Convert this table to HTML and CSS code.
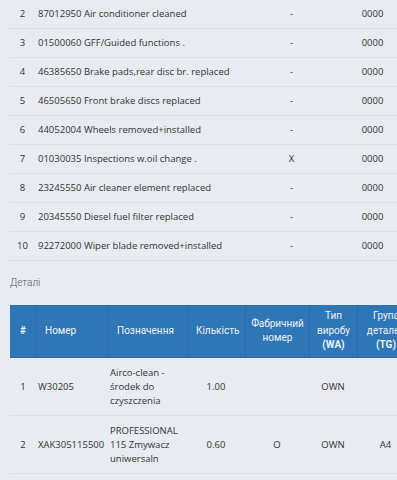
FILE: index.html
```html
<!DOCTYPE html>
<html lang="uk">
<head>
<meta charset="utf-8">
<link rel="stylesheet" href="styles.css">
</head>
<body>
<div class="page">
  <table class="ops">
    <colgroup>
      <col class="c-num"><col class="c-desc"><col class="c-flag"><col class="c-code">
    </colgroup>
    <tbody>
      <tr><td class="num">2</td><td>87012950 Air conditioner cleaned</td><td class="ctr">-</td><td class="ctr">0000</td></tr>
      <tr><td class="num">3</td><td>01500060 GFF/Guided functions .</td><td class="ctr">-</td><td class="ctr">0000</td></tr>
      <tr><td class="num">4</td><td>46385650 Brake pads,rear disc br. replaced</td><td class="ctr">-</td><td class="ctr">0000</td></tr>
      <tr><td class="num">5</td><td>46505650 Front brake discs replaced</td><td class="ctr">-</td><td class="ctr">0000</td></tr>
      <tr><td class="num">6</td><td>44052004 Wheels removed+installed</td><td class="ctr">-</td><td class="ctr">0000</td></tr>
      <tr><td class="num">7</td><td>01030035 Inspections w.oil change .</td><td class="ctr">X</td><td class="ctr">0000</td></tr>
      <tr><td class="num">8</td><td>23245550 Air cleaner element replaced</td><td class="ctr">-</td><td class="ctr">0000</td></tr>
      <tr><td class="num">9</td><td>20345550 Diesel fuel filter replaced</td><td class="ctr">-</td><td class="ctr">0000</td></tr>
      <tr><td class="num">10</td><td>92272000 Wiper blade removed+installed</td><td class="ctr">-</td><td class="ctr">0000</td></tr>
    </tbody>
  </table>

  <h3 class="section-title">Деталі</h3>

  <table class="parts">
    <colgroup>
      <col class="p-num"><col class="p-no"><col class="p-name"><col class="p-qty"><col class="p-serial"><col class="p-type"><col class="p-group">
    </colgroup>
    <thead>
      <tr>
        <th class="ctr hash">#</th>
        <th>Номер</th>
        <th>Позначення</th>
        <th>Кількість</th>
        <th class="ctr">Фабричний<br>номер</th>
        <th class="ctr">Тип<br>виробу<br><b>(WA)</b></th>
        <th class="ctr">Група<br>деталей<br><b>(TG)</b></th>
      </tr>
    </thead>
    <tbody>
      <tr>
        <td class="ctr">1</td>
        <td>W30205</td>
        <td>Airco-clean -<br>środek do<br>czyszczenia</td>
        <td class="ctr">1.00</td>
        <td class="ctr"></td>
        <td class="ctr">OWN</td>
        <td class="ctr"></td>
      </tr>
      <tr>
        <td class="ctr">2</td>
        <td>XAK305115500</td>
        <td>PROFESSIONAL<br>115 Zmywacz<br>uniwersaln</td>
        <td class="ctr">0.60</td>
        <td class="ctr">O</td>
        <td class="ctr">OWN</td>
        <td class="ctr">A4</td>
      </tr>
    </tbody>
  </table>
</div>
</body>
</html>
```

FILE: styles.css
```css
html, body {
  margin: 0;
  padding: 0;
  background: #e9ebf3;
  overflow: hidden;
}

.page {
  width: 397px;
  overflow: hidden;
  padding-left: 9px;
  box-sizing: border-box;
  font-family: "Open Sans", "Noto Sans", sans-serif;
  color: #333;
}

table {
  border-collapse: separate;
  border-spacing: 0;
  table-layout: fixed;
}

.ops {
  width: 418px;
}
.c-num { width: 27px; }
.c-desc { width: 229px; }
.c-flag { width: 53px; }
.c-code { width: 109px; }

.ops td {
  box-sizing: border-box;
  height: 29px;
  padding: 0 2px;
  font-size: 9.5px;
  line-height: 14px;
  white-space: nowrap;
  border-bottom: 1px solid #dcdfe8;
  vertical-align: middle;
}

.ctr { text-align: center; }
.num { text-align: center; }

.section-title {
  margin: 15px 0 0 1px;
  height: 29px;
  font-family: Roboto, sans-serif;
  font-weight: 300;
  font-size: 10px;
  line-height: 14px;
  color: #555;
}

.parts {
  width: 404px;
  margin-left: 1px;
}
.p-num { width: 26px; }
.p-no { width: 72px; }
.p-name { width: 79px; }
.p-qty { width: 58px; }
.p-serial { width: 64px; }
.p-type { width: 48px; }
.p-group { width: 57px; }

.parts th {
  box-sizing: border-box;
  background: #2f76b6;
  color: #eef4fa;
  font-family: Roboto, sans-serif;
  font-weight: 400;
  font-size: 10px;
  line-height: 14.5px;
  height: 53px;
  padding: 0 8px;
  text-align: left;
  vertical-align: middle;
  border-left: 1px solid #2b6ca8;
  border-bottom: 1px solid #2a69a3;
  white-space: nowrap;
}
.parts th:first-child { border-left: none; }
.parts th.ctr { text-align: center; padding: 0 4px; }
.parts th.hash { font-weight: 700; }
.parts th b { font-weight: 700; }

.parts td {
  box-sizing: border-box;
  font-size: 9.5px;
  line-height: 14px;
  padding: 0 2px;
  height: 58px;
  vertical-align: middle;
  border-bottom: 1px solid #dcdfe8;
  white-space: nowrap;
}
```
